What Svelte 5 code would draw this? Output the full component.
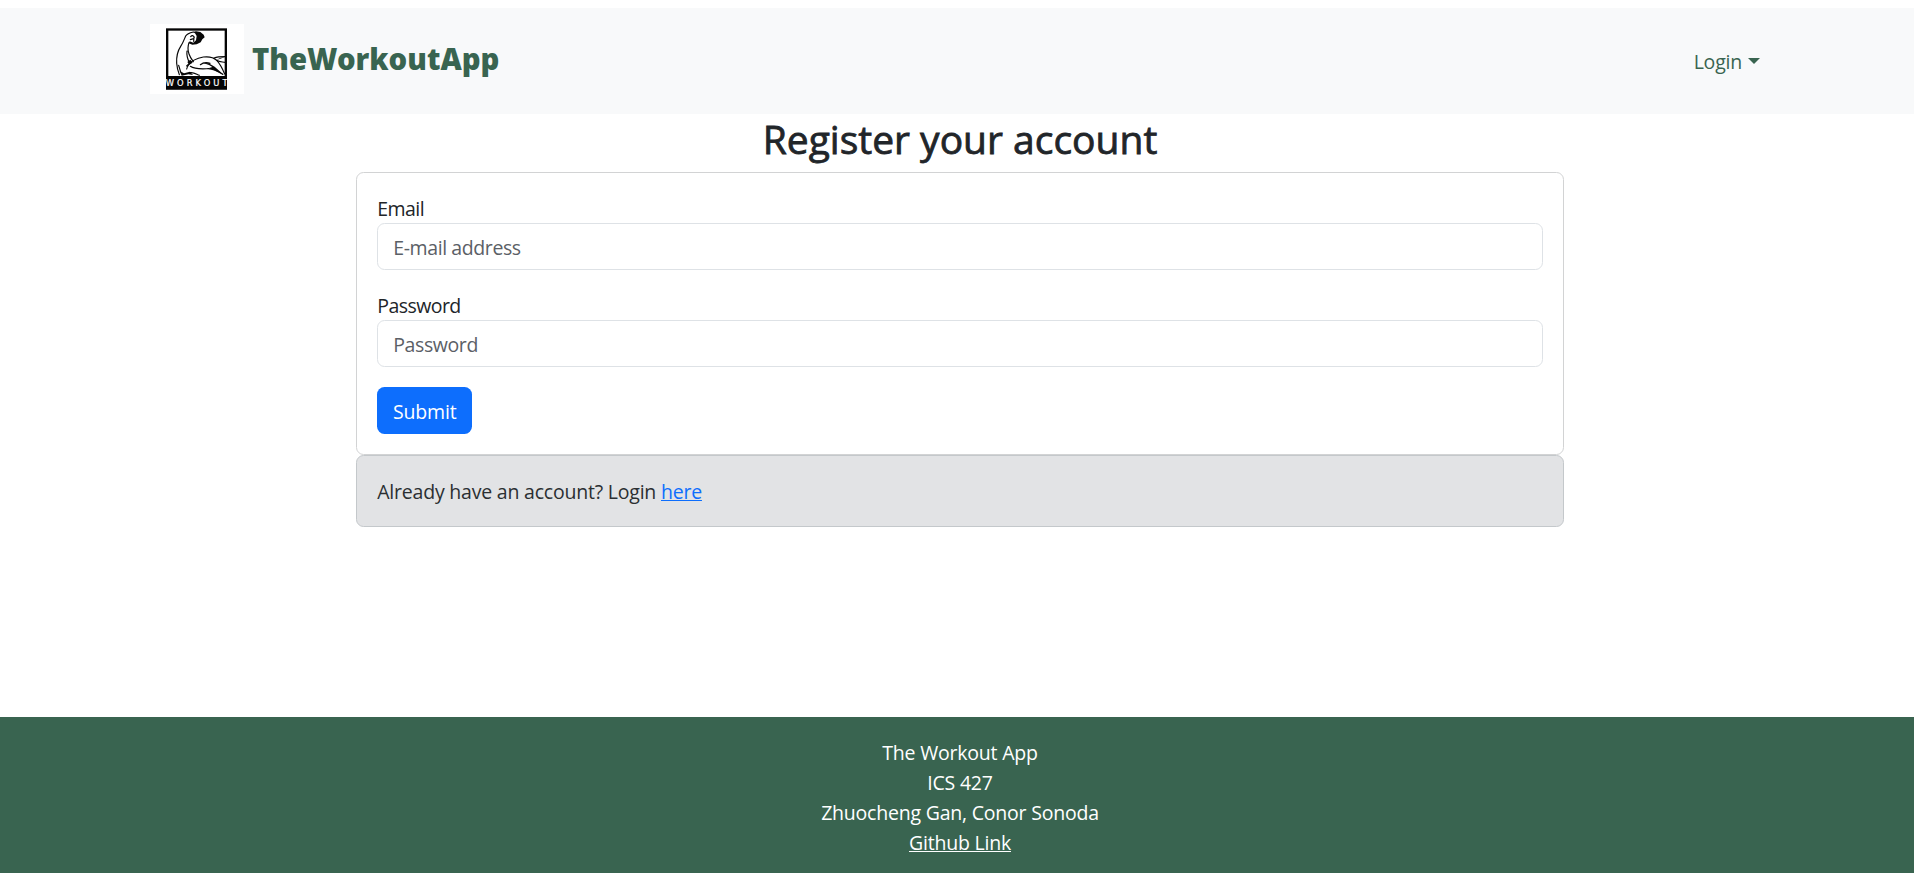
<script lang="ts">
  let email = $state('');
  let password = $state('');
  const footerLines = ['The Workout App', 'ICS 427', 'Zhuocheng Gan, Conor Sonoda'];
</script>

<div class="page">
  <nav>
    <div class="container">
      <a class="brand" href="#home">
        <svg class="logo" viewBox="30 72 282 210" aria-label="Workout">
          <rect x="30" y="72" width="282" height="210" fill="#fff" />
          <rect x="81.500" y="88.500" width="176" height="176" fill="#fff" stroke="#050505" stroke-width="7" />
          <rect x="78" y="228" width="183" height="41" fill="#050505" />
          <g fill="none" stroke="#080808" stroke-width="3.500" stroke-linecap="round" stroke-linejoin="round">
            <path d="M160 96C148 99 140 103 137 108C133 117 129 129 122 139C112 154 109 171 110 190C111 204 115 216 118 224" />
            <path d="M147 128C143 139 143 151 147 162C150 171 154 177 160 185M141 153C139 167 143 178 149 190C145 195 141 200 140 207" />
            <path d="M140 198C153 183 171 174 190 171C207 169 221 172 230 181C237 188 247 205 254 222" />
            <path d="M151 199C166 209 184 207 205 206C220 207 237 216 248 223" />
            <path d="M181 194C190 187 202 187 210 190M222 174C233 170 243 170 255 170M230 181C239 187 247 185 256 187" />
            <path d="M150 218C162 216 168 222 178 226M116 196L122 216" />
            <path d="M152 110C156 105 160 106 163 112M151 119L161 116M162 110L161 124" />
          </g>
          <g fill="#080808">
            <path d="M158 96L168 94L181 96L191 104L194 112L187 118L182 127L170 133L157 134L146 130L149 124L160 128L168 121L170 108L165 100Z" />
            <path d="M187 188L206 190L224 200L252 225L222 210L205 205L217 201L207 195Z" />
            <path d="M119 213L132 220L150 215L159 225L145 223L125 227Z" />
            <path d="M228 180L242 173L255 171L239 177Z" />
            <path d="M142 186L151 179L158 188L148 194Z" />
          </g>
          <text x="77" y="257" textLength="186" lengthAdjust="spacing">WORKOUT</text>
        </svg>
        <span class="name">TheWorkoutApp</span>
      </a>
      <a class="login" href="#login">Login<i class="caret"></i></a>
    </div>
  </nav>

  <main>
    <h2>Register your account</h2>
    <form class="card">
      <label for="email">Email</label>
      <input id="email" type="email" placeholder="E-mail address" bind:value={email} />
      <label for="password">Password</label>
      <input id="password" type="password" placeholder="Password" bind:value={password} />
      <button type="button">Submit</button>
    </form>
    <div class="card notice">Already have an account? Login <a href="#signin">here</a></div>
  </main>

  <footer>
    {#each footerLines as line}
      <div>{line}</div>
    {/each}
    <a href="#github">Github Link</a>
  </footer>
</div>

<style>
  :global(body) { margin: 0; overflow: hidden; background: #fff; }
  :global(*) { box-sizing: border-box; }
  .page {
    width: 1920px;
    height: 873px;
    padding-top: 8px;
    display: flex;
    flex-direction: column;
    overflow: hidden;
    font: 400 19.5px/30px "Open Sans", "Noto Sans", sans-serif;
    letter-spacing: -0.210px;
    color: #212529;
  }
  nav { height: 106px; flex: none; background: #f8f9fa; }
  .container {
    width: 1620px;
    height: 100%;
    margin: 0 auto;
    display: flex;
    align-items: center;
    justify-content: space-between;
  }
  .brand { display: flex; align-items: center; text-decoration: none; color: #396450; padding-bottom: 4px; }
  .logo { width: 94px; height: 70px; display: block; }
  .logo text { font: 400 25px "DejaVu Sans", sans-serif; letter-spacing: 0; fill: #fff; stroke: #fff; stroke-width: 0.600px; }
  .name { margin: 0 0 0 8px; font: 900 29.300px/40px "Noto Sans", "Open Sans", sans-serif; letter-spacing: 0; }
  .login { display: flex; align-items: center; color: #396450; text-decoration: none; padding: 2px 10px 0 0; }
  .caret { margin: -2px 0 0 6px; border: 6px solid transparent; border-top-color: #396450; border-bottom: 0; }
  main { width: 1207.500px; margin: 0 auto; }
  h2 {
    margin: 0 0 9px;
    padding-top: 1px;
    font-size: 39px;
    line-height: 48px;
    font-weight: 500;
    letter-spacing: 0;
    text-align: center;
    -webkit-text-stroke: 0.800px #212529;
  }
  .card { border: 1px solid #d2d3d4; border-radius: 7.500px; padding: 20px; }
  label { display: block; padding-top: 2px; line-height: 28px; letter-spacing: -0.550px; }
  input {
    display: block;
    width: 100%;
    height: 47px;
    margin: 0 0 20px;
    padding: 8px 15px 7px;
    border: 1px solid #dee2e6;
    border-radius: 7.500px;
    font: inherit;
    letter-spacing: -0.400px;
    color: inherit;
    background: #fff;
    outline: none;
  }
  input::placeholder { color: #5b6066; opacity: 1; }
  button {
    display: block;
    width: 95px;
    height: 47px;
    padding: 2px 0 0;
    border: 0;
    border-radius: 7.500px;
    background: #0d6efd;
    color: #fff;
    font: inherit;
    letter-spacing: -0.200px;
  }
  .notice { padding: 21px 20px 19px; background: #e2e3e5; border-color: #c4c8cb; color: #2b2f32; }
  .notice a { color: #0d6efd; }
  footer { margin-top: auto; height: 156px; flex: none; padding-top: 21px; background: #396450; color: #fff; text-align: center; }
  footer a { color: #fff; }
</style>
